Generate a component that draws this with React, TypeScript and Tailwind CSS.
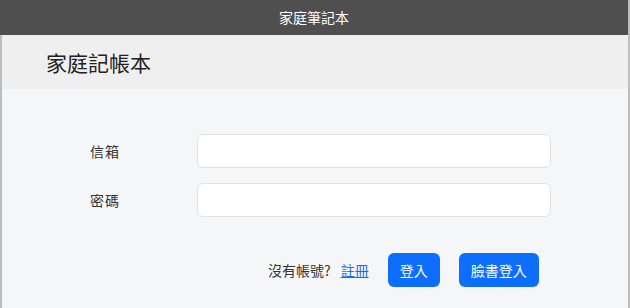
import React from 'react';

const font = { fontFamily: '"Noto Sans CJK TC", "Noto Sans", sans-serif' };

// Form row with label and input
const Field: React.FC<{ label: string; type?: string }> = ({ label, type = 'text' }) => (
  <div className="flex items-center">
    <label className="w-[135px] pl-[28px] text-[14px] text-[#333] tracking-[1px]">{label}</label>
    <input
      type={type}
      className="h-[34px] w-[354px] rounded-[6px] border border-[#dee2e6] bg-white outline-none"
    />
  </div>
);

export default function App() {
  return (
    <div className="flex h-[308px] w-[630px] flex-col overflow-hidden bg-[#f5f6f8]" style={font}>
      {/* window title bar */}
      <div className="flex h-[35px] shrink-0 items-center justify-center border-r-2 border-[#bdbdbd] bg-[#4f4f4f]">
        <span className="text-[14px] text-white">家庭筆記本</span>
      </div>
      <div className="flex flex-1 flex-col border-x-2 border-[#bdbdbd]">
        <header className="flex h-[54px] shrink-0 items-center bg-[#efefef] pl-[44px]">
          <h1 className="text-[21px] font-normal leading-none text-[#222]">家庭記帳本</h1>
        </header>
        <main className="flex flex-1 flex-col pt-[45px] pl-[60px]">
          <div className="flex flex-col gap-[15px]">
            <Field label="信箱" />
            <Field label="密碼" type="password" />
          </div>
          <div className="mt-[36px] flex items-center pl-[206px]">
            <span className="text-[14px] text-[#333]">沒有帳號?</span>
            <a href="#" className="ml-[10px] text-[14px] text-[#0d6efd] underline">註冊</a>
            <button className="ml-[19px] h-[34px] w-[52px] rounded-[6px] bg-[#0d6efd] text-[14px] text-white">登入</button>
            <button className="ml-[19px] h-[34px] w-[80px] rounded-[6px] bg-[#0d6efd] text-[14px] text-white">臉書登入</button>
          </div>
        </main>
      </div>
    </div>
  );
}
